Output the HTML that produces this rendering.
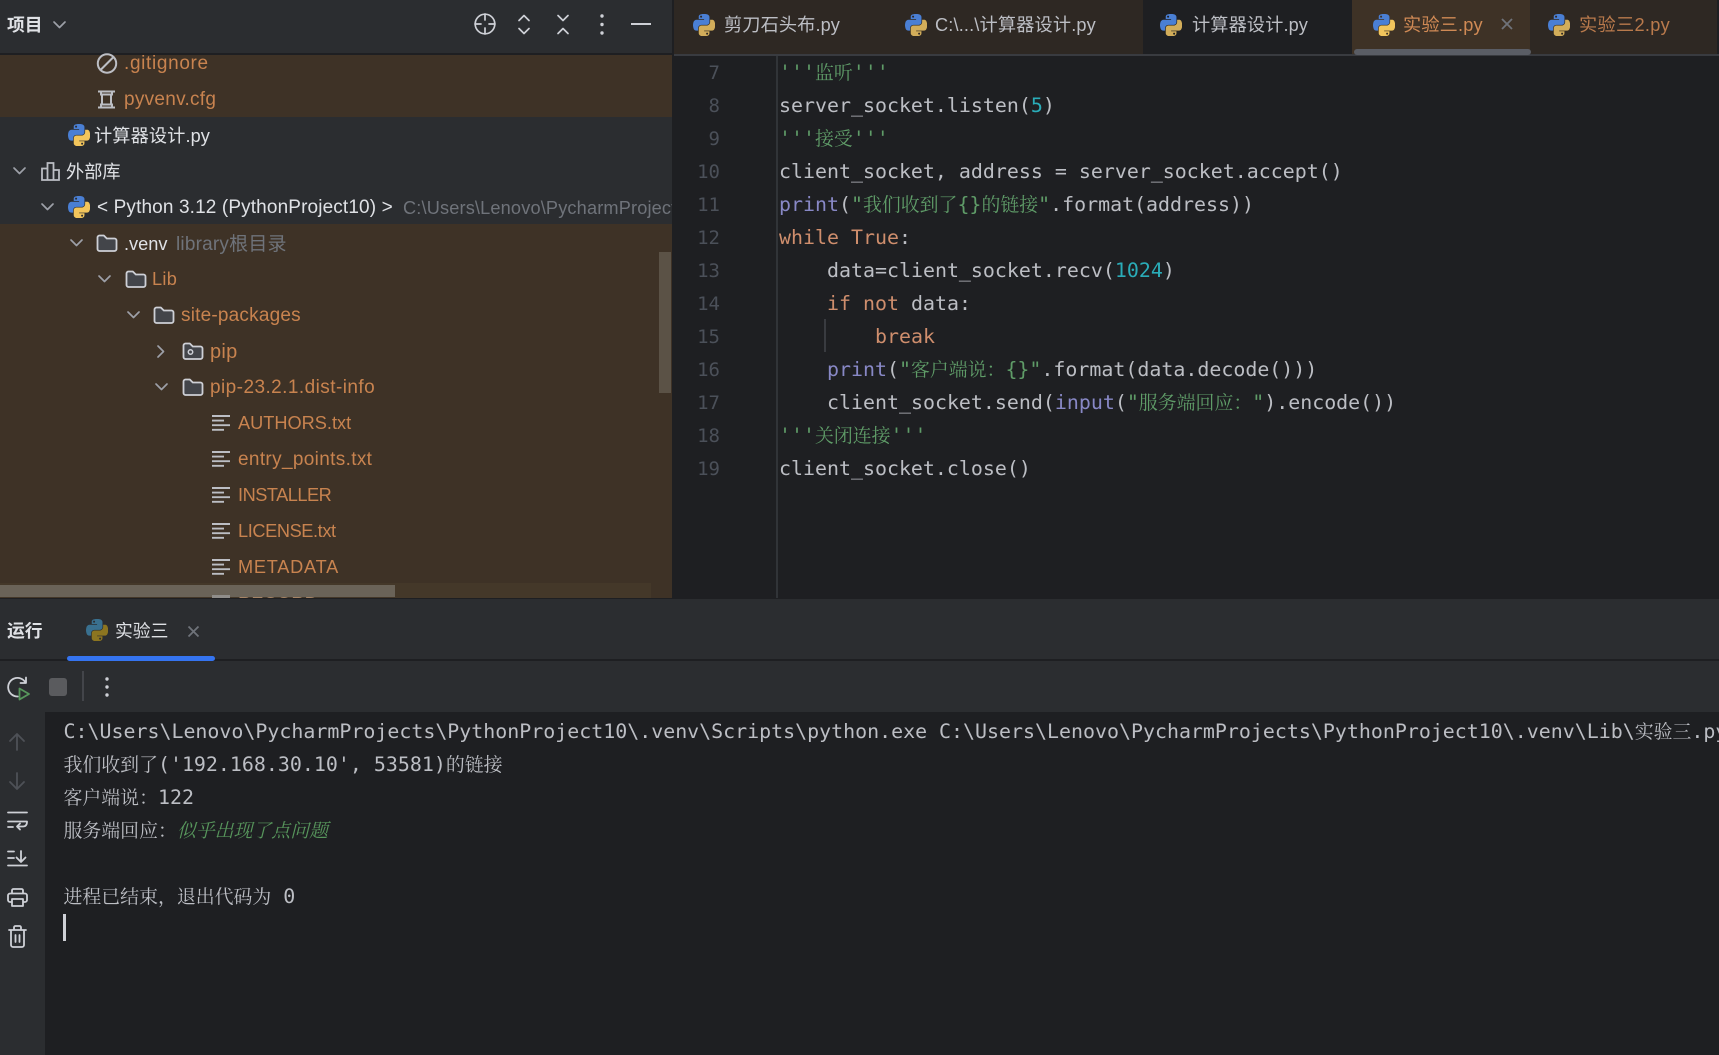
<!DOCTYPE html>
<html lang="zh"><head><meta charset="utf-8"><title>PyCharm</title>
<style>
*{margin:0;padding:0;box-sizing:border-box}
html,body{width:1719px;height:1055px;overflow:hidden;background:#1e1f22}
#r{position:relative;width:1719px;height:1055px;overflow:hidden;font-family:"Liberation Sans","Noto Sans CJK SC",sans-serif;font-size:18.2px;color:#dfe1e5}
.a{position:absolute}
.t{position:absolute;white-space:pre;line-height:36px;height:36px}
.o{color:#c8834f}.g{color:#6f737a}
.m{position:absolute;white-space:pre;font-family:"DejaVu Sans Mono","Liberation Mono",monospace;font-size:19.93px;line-height:33px;height:33px;color:#bcbec4}
.m i{font-style:normal;font-family:"Noto Serif CJK SC","Noto Sans CJK SC",serif;font-size:18.9px;line-height:0}
.s{color:#5f9c68}.n{color:#2aacb8}.k{color:#cf8e6d}.b{color:#8888c6}
.ln{position:absolute;left:674px;width:46px;text-align:right;font-family:"DejaVu Sans Mono",monospace;font-size:19px;line-height:33px;color:#4b5059}
svg{position:absolute;overflow:visible}
.ic{fill:none;stroke:#ced0d6;stroke-width:2;stroke-linecap:round;stroke-linejoin:round}
.ch{fill:none;stroke:#9da0a8;stroke-width:1.7;stroke-linecap:round;stroke-linejoin:round}
.f{fill:#43454a;stroke:#ced0d6;stroke-width:1.8;stroke-linejoin:round}
</style></head><body><div id="r">
<svg width="0" height="0" style="position:absolute"><defs>
<symbol id="py" viewBox="0 0 110 110"><path fill="#4a7fd4" d="M54.919.001c-4.584.022-8.961.413-12.813 1.095C30.76 3.1 28.7 7.295 28.7 15.032v10.219h26.813v3.406H18.638c-7.793 0-14.616 4.684-16.75 13.594-2.462 10.213-2.571 16.586 0 27.25 1.906 7.938 6.457 13.594 14.25 13.594h9.219V70.844c0-8.85 7.657-16.656 16.75-16.656h26.781c7.454 0 13.406-6.138 13.406-13.625V15.032c0-7.266-6.13-12.725-13.406-13.937C64.281.328 59.502-.02 54.919.001zM40.419 8.22c2.77 0 5.031 2.299 5.031 5.125 0 2.816-2.262 5.094-5.031 5.094-2.78 0-5.031-2.278-5.031-5.094 0-2.826 2.252-5.125 5.031-5.125z"/><path fill="#f2c55c" d="M85.638 28.657v11.906c0 9.231-7.826 17-16.75 17H42.106c-7.336 0-13.406 6.278-13.406 13.625v25.531c0 7.266 6.319 11.54 13.406 13.625 8.488 2.496 16.627 2.947 26.781 0 6.75-1.954 13.406-5.888 13.406-13.625V86.501H55.513v-3.406h40.187c7.793 0 10.696-5.436 13.406-13.594 2.8-8.399 2.68-16.476 0-27.25-1.926-7.757-5.604-13.594-13.406-13.594H85.638zM70.575 93.313c2.78 0 5.031 2.278 5.031 5.094 0 2.826-2.252 5.125-5.031 5.125-2.77 0-5.031-2.299-5.031-5.125 0-2.816 2.262-5.094 5.031-5.094z"/></symbol>
<symbol id="pyb" viewBox="0 0 110 110"><path fill="#39708f" d="M54.919.001c-4.584.022-8.961.413-12.813 1.095C30.76 3.1 28.7 7.295 28.7 15.032v10.219h26.813v3.406H18.638c-7.793 0-14.616 4.684-16.75 13.594-2.462 10.213-2.571 16.586 0 27.25 1.906 7.938 6.457 13.594 14.25 13.594h9.219V70.844c0-8.85 7.657-16.656 16.75-16.656h26.781c7.454 0 13.406-6.138 13.406-13.625V15.032c0-7.266-6.13-12.725-13.406-13.937C64.281.328 59.502-.02 54.919.001zM40.419 8.22c2.77 0 5.031 2.299 5.031 5.125 0 2.816-2.262 5.094-5.031 5.094-2.78 0-5.031-2.278-5.031-5.094 0-2.826 2.252-5.125 5.031-5.125z"/><path fill="#8c7520" d="M85.638 28.657v11.906c0 9.231-7.826 17-16.75 17H42.106c-7.336 0-13.406 6.278-13.406 13.625v25.531c0 7.266 6.319 11.54 13.406 13.625 8.488 2.496 16.627 2.947 26.781 0 6.75-1.954 13.406-5.888 13.406-13.625V86.501H55.513v-3.406h40.187c7.793 0 10.696-5.436 13.406-13.594 2.8-8.399 2.68-16.476 0-27.25-1.926-7.757-5.604-13.594-13.406-13.594H85.638zM70.575 93.313c2.78 0 5.031 2.278 5.031 5.094 0 2.826-2.252 5.125-5.031 5.125-2.77 0-5.031-2.299-5.031-5.125 0-2.816 2.262-5.094 5.031-5.094z"/></symbol>
<symbol id="pyd" viewBox="0 0 110 110"><path fill="#4a7fd4" d="M54.919.001c-4.584.022-8.961.413-12.813 1.095C30.76 3.1 28.7 7.295 28.7 15.032v10.219h26.813v3.406H18.638c-7.793 0-14.616 4.684-16.75 13.594-2.462 10.213-2.571 16.586 0 27.25 1.906 7.938 6.457 13.594 14.25 13.594h9.219V70.844c0-8.85 7.657-16.656 16.75-16.656h26.781c7.454 0 13.406-6.138 13.406-13.625V15.032c0-7.266-6.13-12.725-13.406-13.937C64.281.328 59.502-.02 54.919.001zM40.419 8.22c2.77 0 5.031 2.299 5.031 5.125 0 2.816-2.262 5.094-5.031 5.094-2.78 0-5.031-2.278-5.031-5.094 0-2.826 2.252-5.125 5.031-5.125z"/><path fill="#d2ad5a" d="M85.638 28.657v11.906c0 9.231-7.826 17-16.75 17H42.106c-7.336 0-13.406 6.278-13.406 13.625v25.531c0 7.266 6.319 11.54 13.406 13.625 8.488 2.496 16.627 2.947 26.781 0 6.75-1.954 13.406-5.888 13.406-13.625V86.501H55.513v-3.406h40.187c7.793 0 10.696-5.436 13.406-13.594 2.8-8.399 2.68-16.476 0-27.25-1.926-7.757-5.604-13.594-13.406-13.594H85.638zM70.575 93.313c2.78 0 5.031 2.278 5.031 5.094 0 2.826-2.252 5.125-5.031 5.125-2.77 0-5.031-2.299-5.031-5.125 0-2.816 2.262-5.094 5.031-5.094z"/></symbol>
<symbol id="fo" viewBox="0 0 22 18"><path class="f" d="M1.5 3.5a2 2 0 0 1 2-2h4.3l3 3h7.7a2 2 0 0 1 2 2v8.5a2 2 0 0 1-2 2h-15a2 2 0 0 1-2-2z"/></symbol>
<symbol id="tx" viewBox="0 0 18 16"><path fill="none" stroke="#bcbec4" stroke-width="1.9" d="M0 1h18M0 5.6h12M0 10.2h18M0 14.8h12"/></symbol>
</defs></svg>

<!-- left panel -->
<div class="a" style="left:0;top:0;width:672px;height:53px;background:#2b2d30"></div>
<div class="a" style="left:0;top:53px;width:672px;height:2px;background:#1e1f22"></div>
<div class="a" style="left:0;top:55px;width:672px;height:62px;background:#3e3226"></div>
<div class="a" style="left:0;top:117px;width:672px;height:107px;background:#2b2d30"></div>
<div class="a" style="left:0;top:224px;width:672px;height:374px;background:#3e3226"></div>
<div class="a" style="left:672px;top:0;width:2px;height:598px;background:#1e1f22"></div>

<div class="t" style="left:7px;top:7px;font-weight:bold;font-size:17.8px;color:#dfe1e5">项目</div>
<svg style="left:53px;top:21px" width="13" height="8"><path class="ch" d="M1 1l5.500 5.500L12 1"/></svg>
<svg style="left:474px;top:13px" width="22" height="22"><circle class="ic" style="stroke-width:1.7" cx="11" cy="11" r="9.8"/><path class="ic" style="stroke-width:1.7" d="M11 1v6M11 15v6M1 11h6M15 11h6"/></svg>
<svg style="left:517px;top:14px" width="14" height="21"><path class="ch" style="stroke:#ced0d6" d="M2 6.500l5-5 5 5M2 14.500l5 5 5-5"/></svg>
<svg style="left:556px;top:14px" width="14" height="21"><path class="ch" style="stroke:#ced0d6" d="M2 1.500l5 5 5-5M2 19.500l5-5 5 5"/></svg>
<svg style="left:599px;top:14px" width="6" height="21"><g fill="#ced0d6"><circle cx="3" cy="2" r="1.7"/><circle cx="3" cy="10.500" r="1.7"/><circle cx="3" cy="19" r="1.7"/></g></svg>
<div class="a" style="left:631px;top:23px;width:20px;height:2px;background:#ced0d6"></div>

<svg style="left:97px;top:55px" width="21" height="19"><circle class="ic" style="stroke:#bcbec4" cx="10" cy="8.500" r="9.200"/><path class="ic" style="stroke:#bcbec4" d="M3.500 15L16.500 2"/></svg>
<div class="t o" style="left:124px;top:46px;font-size:19px;letter-spacing:.66px">.gitignore</div>
<svg style="left:97px;top:90px" width="19" height="19"><path fill="none" stroke="#bcbec4" stroke-width="2" d="M1 1.500h17M1 17.500h17M4 1.500v3h11v-3M4 17.500v-3h11v3M5 4.500v10M14 4.500v10"/></svg>
<div class="t o" style="left:124px;top:82px;font-size:19px;letter-spacing:.28px">pyvenv.cfg</div>
<svg style="left:68px;top:124px" width="22" height="22"><use href="#py" width="22" height="22"/></svg>
<div class="t" style="left:94px;top:118px;letter-spacing:.1px">计算器设计.py</div>
<svg style="left:13px;top:167px" width="13" height="8"><path class="ch" d="M1 1l5.500 5.500L12 1"/></svg>
<svg style="left:41px;top:162px" width="19" height="19"><path fill="none" stroke="#bcbec4" stroke-width="1.8" d="M1 6.500h5.500v11.500H1zM6.500 1h6v17h-6zM12.500 8h5.500v10h-5.500z"/></svg>
<div class="t" style="left:66px;top:154px">外部库</div>
<svg style="left:41px;top:203px" width="13" height="8"><path class="ch" d="M1 1l5.500 5.500L12 1"/></svg>
<svg style="left:68px;top:196px" width="22" height="22"><use href="#py" width="22" height="22"/></svg>
<div class="t" style="left:97px;top:190px;font-size:19px;letter-spacing:.13px">&lt; Python 3.12 (PythonProject10) &gt;</div>
<div class="a" style="left:403px;top:190px;width:269px;height:34px;overflow:hidden"><div class="t g" style="left:0;top:0;letter-spacing:.15px">C:\Users\Lenovo\PycharmProjects\PythonProject10</div></div>

<svg style="left:70px;top:239px" width="13" height="8"><path class="ch" d="M1 1l5.500 5.500L12 1"/></svg>
<svg style="left:96px;top:234px" width="22" height="18"><use href="#fo" width="22" height="18"/></svg>
<div class="t" style="left:124px;top:226px">.venv</div>
<div class="t g" style="left:176px;top:227px;font-size:19px;letter-spacing:.2px">library根目录</div>
<svg style="left:98px;top:275px" width="13" height="8"><path class="ch" d="M1 1l5.500 5.500L12 1"/></svg>
<svg style="left:125px;top:270px" width="22" height="18"><use href="#fo" width="22" height="18"/></svg>
<div class="t o" style="left:152px;top:261px;letter-spacing:.3px">Lib</div>
<svg style="left:127px;top:311px" width="13" height="8"><path class="ch" d="M1 1l5.500 5.500L12 1"/></svg>
<svg style="left:153px;top:306px" width="22" height="18"><use href="#fo" width="22" height="18"/></svg>
<div class="t o" style="left:181px;top:298px;font-size:19px;letter-spacing:.2px">site-packages</div>
<svg style="left:157px;top:345px" width="8" height="13"><path class="ch" d="M1 1l5.500 5.500L1 12"/></svg>
<svg style="left:182px;top:342px" width="22" height="18"><use href="#fo" width="22" height="18"/><circle cx="8.500" cy="10" r="2.200" fill="none" stroke="#ced0d6" stroke-width="1.500"/></svg>
<div class="t o" style="left:210px;top:334px;font-size:20px;letter-spacing:.3px">pip</div>
<svg style="left:155px;top:383px" width="13" height="8"><path class="ch" d="M1 1l5.500 5.500L12 1"/></svg>
<svg style="left:182px;top:378px" width="22" height="18"><use href="#fo" width="22" height="18"/></svg>
<div class="t o" style="left:210px;top:370px;font-size:19px;letter-spacing:.44px">pip-23.2.1.dist-info</div>

<svg style="left:212px;top:415px" width="18" height="16"><use href="#tx" width="18" height="16"/></svg>
<div class="t o" style="left:238px;top:405px">AUTHORS.txt</div>
<svg style="left:212px;top:451px" width="18" height="16"><use href="#tx" width="18" height="16"/></svg>
<div class="t o" style="left:238px;top:442px;font-size:19px;letter-spacing:.34px">entry_points.txt</div>
<svg style="left:212px;top:487px" width="18" height="16"><use href="#tx" width="18" height="16"/></svg>
<div class="t o" style="left:238px;top:477px;letter-spacing:-.49px">INSTALLER</div>
<svg style="left:212px;top:523px" width="18" height="16"><use href="#tx" width="18" height="16"/></svg>
<div class="t o" style="left:238px;top:513px;letter-spacing:-.4px">LICENSE.txt</div>
<svg style="left:212px;top:559px" width="18" height="16"><use href="#tx" width="18" height="16"/></svg>
<div class="t o" style="left:238px;top:549px;letter-spacing:.75px">METADATA</div>

<div class="a" style="left:0;top:583px;width:651px;height:15px;background:#443829"></div>
<div class="a" style="left:0;top:585px;width:395px;height:12px;background:#6a6358"></div>
<div class="a" style="left:659px;top:252px;width:12px;height:141px;background:#5b5246"></div>
<div class="a" style="left:212px;top:595px;width:18px;height:3px;background:#8f8d8a"></div>
<div class="a" style="left:0;top:560px;width:672px;height:38px;overflow:hidden"><div class="t" style="left:238px;top:26px;color:#a58465;letter-spacing:.2px">RECORD</div></div>

<!-- tabs -->
<div class="a" style="left:674px;top:0;width:469px;height:54px;background:#2e2823"></div>
<div class="a" style="left:1143px;top:0;width:209px;height:54px;background:#1e1f22"></div>
<div class="a" style="left:1352px;top:0;width:178px;height:54px;background:#3e3226"></div>
<div class="a" style="left:1530px;top:0;width:187px;height:54px;background:#2e2823"></div>
<div class="a" style="left:674px;top:54px;width:1045px;height:2px;background:#393b40"></div>
<div class="a" style="left:1354px;top:49px;width:177px;height:6px;background:#5a5d65;border-radius:3px"></div>

<svg style="left:693px;top:14px" width="22" height="22"><use href="#pyd" width="22" height="22"/></svg>
<div class="t" style="left:724px;top:7px;color:#bcbec4;letter-spacing:.1px">剪刀石头布.py</div>
<svg style="left:905px;top:14px" width="22" height="22"><use href="#pyd" width="22" height="22"/></svg>
<div class="t" style="left:935px;top:7px;color:#bcbec4;letter-spacing:.15px">C:\...\计算器设计.py</div>
<svg style="left:1160px;top:14px" width="22" height="22"><use href="#pyd" width="22" height="22"/></svg>
<div class="t" style="left:1192px;top:7px;color:#bcbec4;letter-spacing:.1px">计算器设计.py</div>
<svg style="left:1373px;top:14px" width="22" height="22"><use href="#py" width="22" height="22"/></svg>
<div class="t" style="left:1403px;top:7px;color:#d08a55;letter-spacing:.15px">实验三.py</div>
<svg style="left:1501px;top:18px" width="12" height="12"><path d="M1 1l10 10M11 1L1 11" stroke="#6f737a" stroke-width="1.800" fill="none"/></svg>
<svg style="left:1548px;top:14px" width="22" height="22"><use href="#pyd" width="22" height="22"/></svg>
<div class="t" style="left:1579px;top:7px;color:#b97a4c;letter-spacing:.3px">实验三2.py</div>

<!-- editor -->
<div class="a" style="left:776px;top:56px;width:1.500px;height:542px;background:#313438"></div>
<div class="a" style="left:824px;top:319px;width:1.500px;height:33px;background:#393b40"></div>

<div class="ln" style="top:57px">7</div>
<div class="ln" style="top:90px">8</div>
<div class="ln" style="top:123px">9</div>
<div class="ln" style="top:156px">10</div>
<div class="ln" style="top:189px">11</div>
<div class="ln" style="top:222px">12</div>
<div class="ln" style="top:255px">13</div>
<div class="ln" style="top:288px">14</div>
<div class="ln" style="top:321px">15</div>
<div class="ln" style="top:354px">16</div>
<div class="ln" style="top:387px">17</div>
<div class="ln" style="top:420px">18</div>
<div class="ln" style="top:453px">19</div>

<div class="m s" style="left:779px;top:56px">'''<i>监听</i>'''</div>
<div class="m" style="left:779px;top:89px">server_socket.listen(<span class="n">5</span>)</div>
<div class="m s" style="left:779px;top:122px">'''<i>接受</i>'''</div>
<div class="m" style="left:779px;top:155px">client_socket, address = server_socket.accept()</div>
<div class="m" style="left:779px;top:188px"><span class="b">print</span>(<span class="s">"<i>我们收到了</i>{}<i>的链接</i>"</span>.format(address))</div>
<div class="m" style="left:779px;top:221px"><span class="k">while True</span>:</div>
<div class="m" style="left:827px;top:254px">data=client_socket.recv(<span class="n">1024</span>)</div>
<div class="m" style="left:827px;top:287px"><span class="k">if not</span> data:</div>
<div class="m k" style="left:875px;top:320px">break</div>
<div class="m" style="left:827px;top:353px"><span class="b">print</span>(<span class="s">"<i>客户端说：</i>{}"</span>.format(data.decode()))</div>
<div class="m" style="left:827px;top:386px">client_socket.send(<span class="b">input</span>(<span class="s">"<i>服务端回应：</i>"</span>).encode())</div>
<div class="m s" style="left:779px;top:419px">'''<i>关闭连接</i>'''</div>
<div class="m" style="left:779px;top:452px">client_socket.close()</div>

<!-- bottom panel -->
<div class="a" style="left:0;top:598px;width:1719px;height:114px;background:#2b2d30"></div>
<div class="a" style="left:0;top:598px;width:1719px;height:1px;background:#1e1f22"></div>
<div class="a" style="left:0;top:659px;width:1719px;height:2px;background:#1e1f22"></div>
<div class="a" style="left:67px;top:656px;width:148px;height:5px;background:#3574f0;border-radius:2.500px"></div>
<div class="t" style="left:7px;top:613px;font-weight:bold;font-size:17.8px">运行</div>
<svg style="left:86px;top:619px" width="22" height="22"><use href="#pyb" width="22" height="22"/></svg>
<div class="t" style="left:115px;top:613px;font-size:17.800px">实验三</div>
<svg style="left:188px;top:626px" width="11" height="11"><path d="M.5.5l10 10M10.500.5l-10 10" stroke="#6f737a" stroke-width="1.800" fill="none"/></svg>

<svg style="left:8px;top:676px" width="22" height="24"><path fill="none" stroke="#ced0d6" stroke-width="1.800" stroke-linecap="round" stroke-linejoin="round" d="M17.500 6.500A9.300 9.300 0 1 0 9.800 20.500M18 1.500v5.500h-5.500"/><path fill="none" stroke="#57965c" stroke-width="1.800" stroke-linejoin="round" d="M11.500 12.500l9.500 5.500-9.500 5.500z"/></svg>
<div class="a" style="left:49px;top:678px;width:18px;height:18px;background:#5a5b5e;border-radius:3px"></div>
<div class="a" style="left:82px;top:671px;width:2px;height:30px;background:#43454a"></div>
<svg style="left:104px;top:677px" width="6" height="20"><g fill="#ced0d6"><circle cx="3" cy="2" r="1.700"/><circle cx="3" cy="10" r="1.700"/><circle cx="3" cy="18" r="1.700"/></g></svg>

<div class="a" style="left:0;top:712px;width:45px;height:343px;background:#2b2d30"></div>
<svg style="left:9px;top:733px" width="16" height="18"><path fill="none" stroke="#4e5157" stroke-width="1.800" stroke-linecap="round" stroke-linejoin="round" d="M8 17V1M1 8l7-7 7 7"/></svg>
<svg style="left:9px;top:772px" width="16" height="18"><path fill="none" stroke="#4e5157" stroke-width="1.800" stroke-linecap="round" stroke-linejoin="round" d="M8 1v16M1 10l7 7 7-7"/></svg>
<svg style="left:7px;top:811px" width="21" height="20"><path class="ic" style="stroke-width:1.800" d="M1 1.500h19M1 10.500h19c0 3.500-1.500 5-4 5H10M13 12.500l-3 3 3 3M1 16h5"/></svg>
<svg style="left:7px;top:850px" width="21" height="17"><path class="ic" style="stroke-width:1.800" d="M1 1.500h6M1 8h6M1 15.500h19M14 1v11M9.500 7.500l4.500 4.500 4.500-4.500"/></svg>
<svg style="left:7px;top:888px" width="21" height="19"><path class="ic" style="stroke-width:1.800" d="M5 5.500V2.500a1.500 1.500 0 0 1 1.500-1.500h8a1.500 1.500 0 0 1 1.500 1.500v3M5 14H3a2 2 0 0 1-2-2V7.500a2 2 0 0 1 2-2h15a2 2 0 0 1 2 2V12a2 2 0 0 1-2 2h-2M5 11h11v7H5z"/></svg>
<svg style="left:8px;top:925px" width="19" height="23"><path class="ic" style="stroke-width:1.800" d="M1 5h17M6 5V2.500A1.500 1.500 0 0 1 7.500 1h4A1.500 1.500 0 0 1 13 2.500V5M3 5v15a2 2 0 0 0 2 2h9a2 2 0 0 0 2-2V5M7.500 10v7M11.500 10v7"/></svg>

<div class="m" style="left:63.500px;top:715px">C:\Users\Lenovo\PycharmProjects\PythonProject10\.venv\Scripts\python.exe C:\Users\Lenovo\PycharmProjects\PythonProject10\.venv\Lib\<i>实验三</i>.py</div>
<div class="m" style="left:63.500px;top:748px"><i>我们收到了</i>('192.168.30.10', 53581)<i>的链接</i></div>
<div class="m" style="left:63.500px;top:781px"><i>客户端说：</i>122</div>
<div class="m" style="left:63.500px;top:814px"><i>服务端回应：</i><span class="s" style="color:#57965c"><i style="font-style:italic">似乎出现了点问题</i></span></div>
<div class="m" style="left:63.500px;top:880px"><i>进程已结束，退出代码为</i> 0</div>
<div class="a" style="left:63px;top:914px;width:3px;height:27px;background:#ced0d6"></div>
</div></body></html>
